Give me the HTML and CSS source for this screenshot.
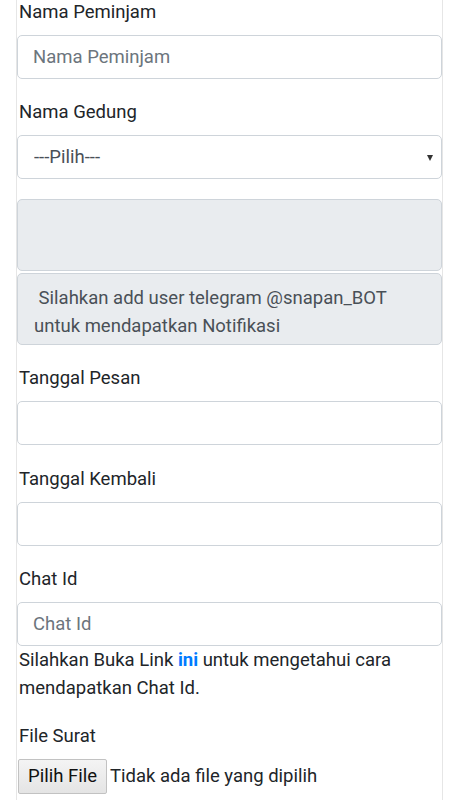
FILE: index.html
```html
<!DOCTYPE html>
<html lang="id">
<head>
<meta charset="utf-8">
<title>Form Peminjaman</title>
<link rel="stylesheet" href="styles.css">
</head>
<body>
<div class="page">
  <form class="form">
    <div class="group">
      <label class="label">Nama Peminjam</label>
      <input class="control" type="text" placeholder="Nama Peminjam">
    </div>
    <div class="group">
      <label class="label">Nama Gedung</label>
      <div class="select-wrap">
        <select class="control select">
          <option>---Pilih---</option>
        </select>
        <span class="caret"></span>
      </div>
    </div>
    <div class="group">
      <div class="box box-empty"></div>
      <div class="box box-note">&nbsp;Silahkan add user telegram @snapan_BOT untuk mendapatkan Notifikasi</div>
    </div>
    <div class="group">
      <label class="label">Tanggal Pesan</label>
      <input class="control" type="text">
    </div>
    <div class="group">
      <label class="label">Tanggal Kembali</label>
      <input class="control" type="text">
    </div>
    <div class="group">
      <label class="label">Chat Id</label>
      <input class="control" type="text" placeholder="Chat Id">
      <p class="help">Silahkan Buka Link <a class="link" href="#">ini</a> untuk mengetahui cara mendapatkan Chat Id.</p>
    </div>
    <div class="group">
      <label class="label">File Surat</label>
      <div class="file">
        <span class="file-btn">Pilih File</span>
        <span class="file-name">Tidak ada file yang dipilih</span>
      </div>
    </div>
  </form>
</div>
</body>
</html>
```

FILE: styles.css
```css
* { box-sizing: border-box; }
html, body { margin: 0; padding: 0; background: #ffffff; }
body {
  font-family: Roboto, "Noto Sans", sans-serif;
  font-size: 18.5px;
  line-height: 28px;
  color: #212529;
}
.page {
  margin-left: 16px;
  width: 427px;
  min-height: 820px;
  border-left: 1px solid #e6e6e6;
  border-right: 1px solid #e6e6e6;
  margin-top: -2.5px;
}
.form { display: flex; flex-direction: column; }
.group {
  display: flex;
  flex-direction: column;
  margin-bottom: 19.5px;
}
.label {
  display: block;
  margin-bottom: 9px;
  line-height: 28px;
  padding-left: 2px;
}
.control {
  display: block;
  width: 100%;
  height: 44px;
  padding: 0 15px;
  font-family: inherit;
  font-size: 18.5px;
  color: #495057;
  background: #ffffff;
  border: 1px solid #ced4da;
  border-radius: 5px;
  outline: none;
  margin: 0;
}
.control::placeholder { color: #6c757d; opacity: 1; }
.select-wrap { position: relative; }
.select {
  -webkit-appearance: none;
  appearance: none;
  padding-left: 16px;
}
.caret {
  position: absolute;
  right: 9px;
  top: 20px;
  width: 0;
  height: 0;
  border-left: 3.5px solid transparent;
  border-right: 3.5px solid transparent;
  border-top: 6px solid #333;
}
.box {
  background: #e9ecef;
  border: 1px solid #ced4da;
  border-radius: 5px;
  width: 100%;
}
.box-empty { height: 72px; margin-bottom: 2px; }
.box-note {
  height: 72px;
  padding: 10px 15px 0 16px;
  color: #495057;
  line-height: 28px;
}
.help {
  margin: 0;
  padding-left: 2px;
  line-height: 28px;
  color: #212529;
}
.link {
  color: #007bff;
  font-weight: 700;
  text-decoration: none;
}
.file {
  display: flex;
  align-items: center;
  gap: 3px;
  padding-left: 1px;
}
.file-btn {
  display: inline-flex;
  align-items: center;
  height: 35px;
  padding: 0 9px;
  background: linear-gradient(#f4f4f4, #e4e4e4);
  border: 1px solid #c2c2c2;
  border-radius: 2px;
  color: #111;
  font-size: 18.5px;
}
.file-name { color: #212529; }
```
